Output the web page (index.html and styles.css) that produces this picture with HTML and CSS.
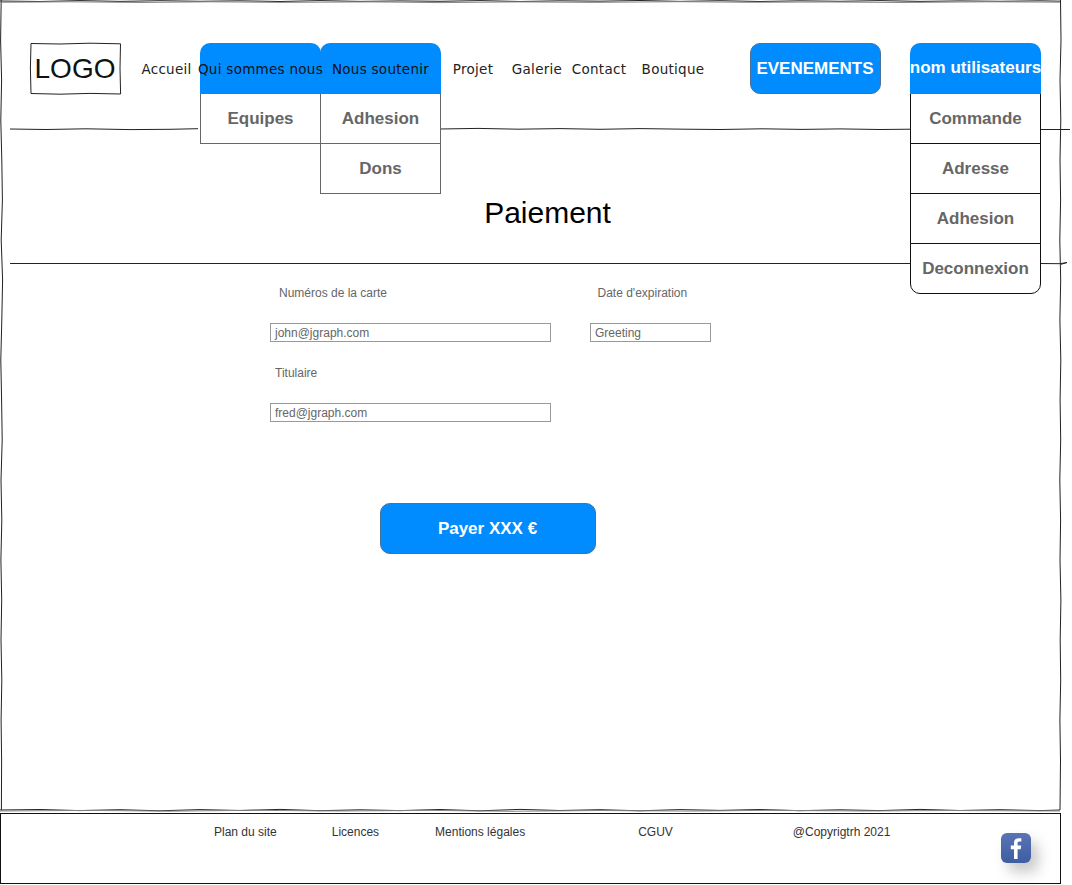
FILE: index.html
```html
<!DOCTYPE html>
<html lang="fr">
<head>
<meta charset="utf-8">
<title>Paiement</title>
<link rel="stylesheet" href="styles.css">
</head>
<body>
<div class="page">
  <svg class="sketch" width="1072" height="885" viewBox="0 0 1072 885" fill="none">
    <g class="sketch-main">
      <polyline points="0,1 40,1.500 80,.6 120,1.400 160,.7 200,1.300 240,.8 280,1.500 320,.6 360,1.400 400,.9 440,1.300 480,.6 520,1.500 560,.8 600,1.200 640,.5 680,1.400 720,.7 760,1.500 800,.8 840,1.300 880,.6 920,1.400 960,.9 1000,1.300 1040,.8 1060,1.200"/>
      <polyline points="1060.500,0 1061,40 1060,80 1060.800,120 1060,160 1060.600,200 1059.800,240 1060.700,280 1059.900,320 1060.800,360 1060.100,400 1060.700,440 1059.800,480 1060.600,520 1060,560 1060.900,600 1060.200,640 1060.700,680 1059.900,720 1060.500,760 1060,810"/>
      <polyline points="0,810 40,809.500 80,810.600 120,809.700 160,810.800 200,809.600 240,810.500 280,809.400 320,810.700 360,809.800 400,810.600 440,809.500 480,810.800 520,809.400 560,810.500 600,809.700 640,810.800 680,809.600 720,810.400 760,809.500 800,810.700 840,809.800 880,810.600 920,809.400 960,810.500 1000,809.700 1040,810.600 1060,810"/>
      <polyline points="1.200,0 .6,40 1.600,80 .8,120 1.800,160 2.400,200 1.200,240 2.600,280 1.800,320 .8,360 1.600,400 2.200,440 1,480 1.800,520 .9,560 1.700,600 1,640 1.800,680 1.100,720 1.600,760 1.400,810"/>
      <polyline points="10,129 46,129.500 86,128.800 130,129.600 170,129.300 198,128.700"/>
      <polyline points="440,129 478,128.400 518,129.200 560,128.600 600,129.300 640,128.600 684,129.200 720,129.500 762,128.800 802,129.400 840,128.900 880,129.500 912,129.200"/>
      <path d="M1040 129.500h30"/>
      <path d="M10 263.500h900M1040 263.500l20 .2 7-1.200-6 1.800"/>
      <polyline points="31,43.500 60,44 90,43.200 120.500,43.800 120,68 120.600,94 90,93.400 60,94.200 31,93.500 30.400,68 31,43.500"/>
    </g>
    <g class="sketch-soft">
      <polyline points="0,2.300 70,1.800 140,2.500 210,1.800 280,2.400 370,1.900 440,2.600 520,1.900 590,2.400 680,1.700 750,2.300 830,2 900,2.500 990,1.800 1060,2.200"/>
      <polyline points="0,811 90,810.400 170,811.200 250,810.300 340,811 430,810.400 510,811.300 600,810.500 690,811.100 770,810.300 860,811 950,810.500 1060,811"/>
    </g>
  </svg>

  <header class="top">
    <div class="logo">LOGO</div>
    <a class="link link-home">Accueil</a>
    <div class="menu menu-first">
      <div class="menu-head">Qui sommes nous</div>
      <div class="menu-row">Equipes</div>
    </div>
    <div class="menu menu-next">
      <div class="menu-head">Nous soutenir</div>
      <div class="menu-row">Adhesion</div>
      <div class="menu-row">Dons</div>
    </div>
    <a class="link link-projet">Projet</a>
    <a class="link link-galerie">Galerie</a>
    <a class="link link-contact">Contact</a>
    <a class="link link-boutique">Boutique</a>
    <button class="events">EVENEMENTS</button>
    <div class="menu menu-user">
      <div class="menu-head">nom utilisateurs</div>
      <div class="menu-row">Commande</div>
      <div class="menu-row">Adresse</div>
      <div class="menu-row">Adhesion</div>
      <div class="menu-row">Deconnexion</div>
    </div>
  </header>

  <h1 class="title">Paiement</h1>

  <form class="form">
    <div class="fields">
      <label class="label label-card">Numéros de la carte</label>
      <label class="label label-date">Date d'expiration</label>
      <div class="input">john@jgraph.com</div>
      <div class="input">Greeting</div>
      <label class="label label-owner">Titulaire</label>
      <span></span>
      <div class="input">fred@jgraph.com</div>
    </div>
    <button class="pay" type="button">Payer XXX €</button>
  </form>

  <footer class="foot">
    <a class="foot-link foot-plan">Plan du site</a>
    <a class="foot-link foot-lic">Licences</a>
    <a class="foot-link foot-ment">Mentions légales</a>
    <a class="foot-link foot-cgu">CGUV</a>
    <a class="foot-link foot-copy">@Copyrigtrh 2021</a>
    <div class="fb">
      <svg width="30" height="30" viewBox="0 0 30 30">
        <path fill="#fff" d="M13 26v-9.800h-3.200v-3.600h3.200v-2.700c0-3.100 1.900-4.700 4.600-4.700 1.300 0 2.400.1 2.700.15v3.200h-1.900c-1.500 0-1.800.7-1.800 1.700v2.350h3.600l-.5 3.600h-3.100V26z"/>
      </svg>
    </div>
  </footer>
</div>
</body>
</html>
```

FILE: styles.css
```css
* { box-sizing: border-box; }
html, body { margin: 0; padding: 0; background: #fff; }
.page {
  position: relative;
  width: 1072px;
  height: 885px;
  overflow: hidden;
  display: flex;
  flex-direction: column;
  font-family: "Liberation Sans", Arial, sans-serif;
}
.sketch { position: absolute; left: 0; top: 0; }
.sketch-main { stroke: #222; stroke-width: 1; }
.sketch-soft { stroke: #888; stroke-width: 1; }

.top {
  position: relative;
  display: flex;
  align-items: flex-start;
  height: 51px;
  margin-top: 43px;
  padding-left: 30px;
}
.logo {
  width: 91px;
  height: 51px;
  padding-right: 1px;
  font-size: 28px;
  line-height: 51px;
  text-align: center;
  color: #111;
}
.link {
  display: flex;
  justify-content: center;
  height: 51px;
  line-height: 52px;
  font-family: "DejaVu Sans", Verdana, sans-serif;
  font-size: 13.500px;
  letter-spacing: .28px;
  white-space: nowrap;
  color: #222;
}
.link-home { width: 79px; padding-left: 12px; }
.link-projet { width: 65px; padding-right: 1px; }
.link-galerie { width: 62px; }
.link-contact { width: 62px; }
.link-boutique { width: 86px; }

.menu { position: relative; width: 121px; }
.menu-first { z-index: 2; }
.menu-next { margin-left: -1px; }
.menu-head {
  position: relative;
  z-index: 1;
  display: flex;
  justify-content: center;
  height: 51px;
  line-height: 52px;
  background: #008cff;
  border-radius: 10px 10px 0 0;
  font-family: "DejaVu Sans", Verdana, sans-serif;
  font-size: 13.500px;
  letter-spacing: .28px;
  white-space: nowrap;
  color: #111;
}
.menu-row {
  height: 51px;
  margin-top: -1px;
  border: 1px solid #666;
  background: #fff;
  font-size: 17px;
  font-weight: 700;
  line-height: 49px;
  text-align: center;
  color: #666;
}

.events {
  width: 131px;
  height: 51px;
  margin-left: 34px;
  padding: 0 1px 0 0;
  border: 1px solid #4a7298;
  border-radius: 10px;
  background: #008cff;
  font: 700 17px "Liberation Sans", Arial, sans-serif;
  line-height: 47px;
  color: #fff;
}
.menu-user { width: 131px; margin-left: 29px; }
.menu-user .menu-head {
  font-family: "Liberation Sans", Arial, sans-serif;
  font-size: 17px;
  font-weight: 700;
  letter-spacing: 0;
  line-height: 49px;
  color: #fff;
}
.menu-user .menu-row { border-color: #111; }
.menu-user .menu-row:last-child { border-radius: 0 0 10px 10px; }

.title {
  position: relative;
  margin: 102px 0 0;
  width: 1095px;
  font-size: 30px;
  font-weight: 400;
  line-height: 34px;
  text-align: center;
  color: #000;
}

.form { position: relative; margin: 53px 0 0 270px; }
.fields {
  display: grid;
  grid-template-columns: 281px 121px;
  column-gap: 39px;
  grid-auto-rows: 19px;
  row-gap: 21px;
  justify-content: start;
}
.label {
  padding-top: 1px;
  font-size: 12px;
  line-height: 19px;
  color: #666;
  white-space: nowrap;
}
.label-card { padding-left: 9px; }
.label-date { padding-left: 7.500px; }
.label-owner { padding-left: 5px; }
.input {
  height: 19px;
  padding-left: 4px;
  border: 1px solid #999;
  background: #fff;
  font-size: 12px;
  line-height: 19px;
  color: #666;
}
.pay {
  display: block;
  width: 216px;
  height: 51px;
  margin: 81px 0 0 110px;
  padding: 0 1px 0 0;
  border: 1px solid #4a7298;
  border-radius: 10px;
  background: #008cff;
  font: 700 17px "Liberation Sans", Arial, sans-serif;
  color: #fff;
}

.foot {
  position: relative;
  display: flex;
  align-items: flex-start;
  width: 1061px;
  height: 71px;
  margin-top: auto;
  margin-bottom: 1px;
  border: 1px solid #111;
  font-size: 12px;
  color: #333;
}
.foot-link { padding-top: 11px; line-height: 15px; white-space: nowrap; }
.foot-plan { margin-left: 213px; }
.foot-lic { margin-left: 55px; }
.foot-ment { margin-left: 56px; }
.foot-cgu { margin-left: 113px; }
.foot-copy { margin-left: 120px; }
.fb {
  width: 30px;
  height: 30px;
  margin-top: 19px;
  margin-left: auto;
  margin-right: 29px;
  border-radius: 6px;
  background: linear-gradient(180deg, #5a74b4 0%, #3f5da3 100%);
  box-shadow: 7px 9px 13px rgba(60, 60, 70, .28);
}
.fb svg { display: block; }
```
